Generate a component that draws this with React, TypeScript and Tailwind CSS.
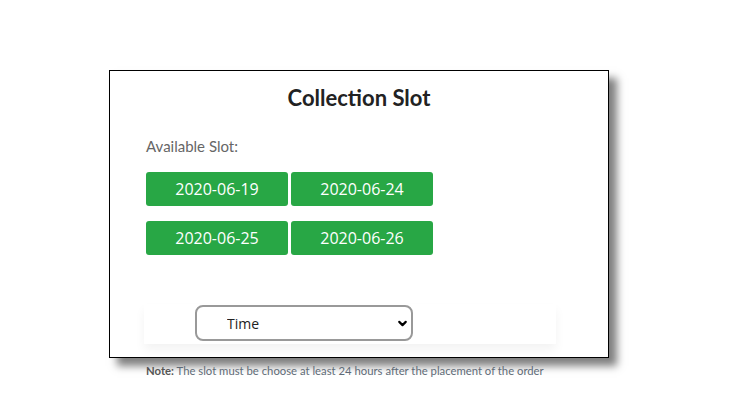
import { ChevronDown } from 'lucide-react';

const slots = ['2020-06-19', '2020-06-24', '2020-06-25', '2020-06-26'];

export default function App() {
  return (
    <div className="min-h-screen bg-white pt-[70px] pl-[109px] font-['Lato',sans-serif]">
      <div className="w-[500px] h-[288px] border border-black bg-white shadow-[8px_8px_8px_rgba(0,0,0,0.5)] pl-[36px] pt-[13px]">
        <h1 className="text-center text-[22px] font-bold text-[#222] leading-7 pr-[36px]">Collection Slot</h1>

        <p className="mt-[24px] text-[15px] text-[#666] leading-5">Available Slot:</p>

        <div className="mt-[16px] grid grid-cols-[142px_142px] gap-x-[3px] gap-y-[15px]">
          {slots.map((s) => (
            <button
              key={s}
              className="h-[34px] rounded-[3px] bg-[#28a745] text-white text-[16px] font-medium font-['Open_Sans',sans-serif]"
            >
              {s}
            </button>
          ))}
        </div>

        <div className="mt-[49px] w-[412px] h-[40px] -ml-[2px] shadow-[0_6px_10px_rgba(0,0,0,0.05)] pl-[51px] pt-[1px]">
          <div className="relative w-[218px]">
            <select className="appearance-none w-full h-[36px] rounded-[8px] border-2 border-[#999] bg-white pl-[30px] text-[14px] text-[#222] font-['Open_Sans',sans-serif] outline-none">
              <option>Time</option>
            </select>
            <ChevronDown className="absolute right-[4px] top-[12px] w-[13px] h-[13px] text-black" strokeWidth={4} />
          </div>
        </div>
      </div>

      <p className="mt-[5px] ml-[37px] text-[11.3px] text-[#5f6b77]">
        <span className="font-bold text-[#555]">Note:</span> The slot must be choose at least 24 hours after the placement of the order
      </p>
    </div>
  );
}
